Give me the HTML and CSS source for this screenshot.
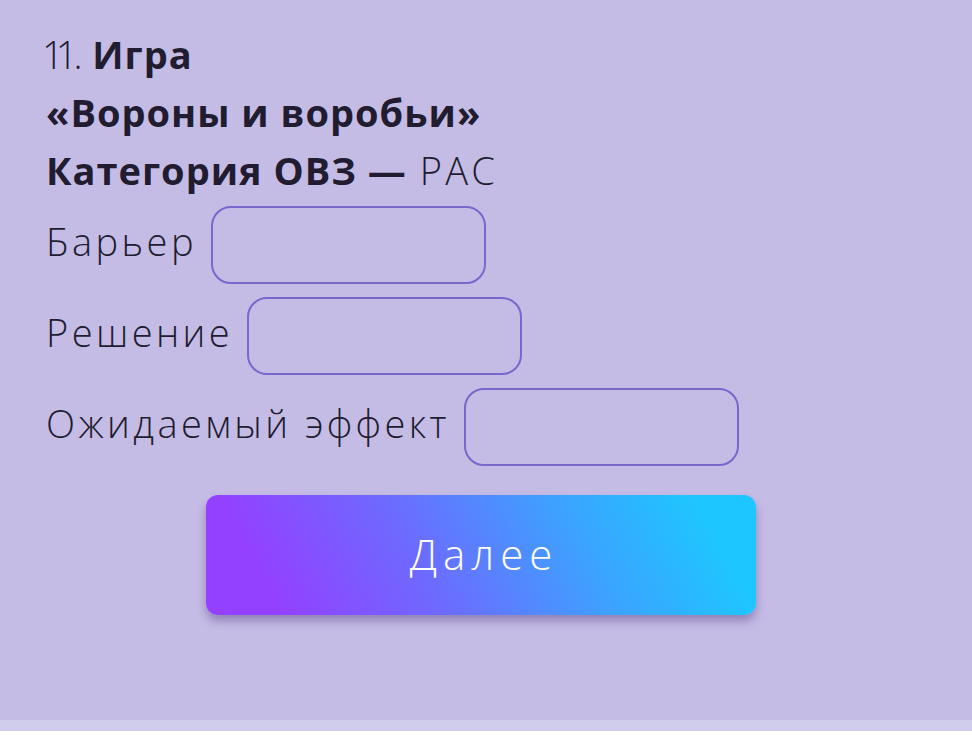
FILE: index.html
```html
<!DOCTYPE html>
<html lang="ru">
<head>
    <meta charset="UTF-8">
    <meta name="viewport" content="width=device-width, initial-scale=1.0">
    <title>Игра «Вороны и воробьи»</title>
    <link rel="stylesheet" href="styles.css">
</head>
<body>
    <div class="card">
        <div class="title">
            <p><span class="num">11</span><span class="dot">. </span><strong>Игра</strong></p>
            <p><strong>«Вороны и воробьи»</strong></p>
            <p><strong>Категория ОВЗ —</strong> РАС</p>
        </div>
        <div class="fields">
            <label class="field"><span>Барьер</span> <input type="text"></label>
            <label class="field"><span>Решение</span> <input type="text"></label>
            <label class="field"><span>Ожидаемый эффект</span> <input type="text"></label>
        </div>
        <div class="actions">
            <button class="next">Далее</button>
        </div>
    </div>
    <div class="strip"></div>
</body>
</html>
```

FILE: styles.css
```css
body {
    margin: 0;
    background-color: #ffffff;
    font-family: "Open Sans", "Lato", sans-serif;
    color: #211c30;
}
.card {
    background-color: #c5bce6;
    height: 720px;
    padding: 25px 56px 0 46px;
    box-sizing: border-box;
}
.strip {
    height: 11px;
    background-color: #d0cceb;
}
.title p {
    margin: 0;
    font-size: 38px;
    line-height: 58px;
    font-weight: 300;
    letter-spacing: 3.2px;
}
.title strong {
    font-weight: 700;
    letter-spacing: 1px;
}
/* the numerals are set tight, like a proportional "1" */
.title .num {
    margin-left: -4px;
    letter-spacing: -8px;
}
.title .dot {
    margin-left: 4px;
    letter-spacing: 0;
}
.fields {
    display: flex;
    flex-direction: column;
    gap: 13px;
    margin-top: 7px;
}
.field {
    display: flex;
    align-items: center;
    gap: 14px;
    font-size: 38px;
    font-weight: 300;
    letter-spacing: 3.4px;
}
.field span {
    padding-bottom: 8px;
}
.field input {
    width: 275px;
    height: 78px;
    box-sizing: border-box;
    border: 2px solid #7a66cc;
    border-radius: 20px;
    background: transparent;
    font: inherit;
    outline: none;
}
.actions {
    display: flex;
    justify-content: center;
    margin-top: 29px;
}
.next {
    width: 550px;
    height: 120px;
    border: none;
    border-radius: 12px;
    background: linear-gradient(62deg, #9440ff 12%, #6f68ff 38%, #3ba4ff 68%, #1ec6ff 90%);
    box-shadow: 0 6px 10px rgba(60, 40, 110, 0.38);
    color: #ffffff;
    font-family: inherit;
    font-size: 42px;
    font-weight: 300;
    letter-spacing: 6px;
    padding: 0 0 4px 6px;
    cursor: pointer;
}
```
